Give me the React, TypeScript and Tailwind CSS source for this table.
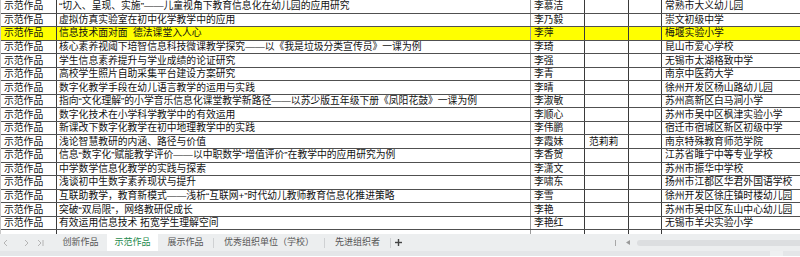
import React from 'react';

type Row = { title: string; name: string; helper?: string; school: string; hl?: boolean };

const rows: Row[] = [
  { title: '“切入、呈现、实施”——儿童视角下教育信息化在幼儿园的应用研究', name: '李慕洁', school: '常熟市大义幼儿园' },
  { title: '虚拟仿真实验室在初中化学教学中的应用', name: '李乃毅', school: '崇文初级中学' },
  { title: '信息技术面对面  德法课堂入人心', name: '李萍', school: '梅堰实验小学', hl: true },
  { title: '核心素养视阈下培智信息科技微课教学探究——以《我是垃圾分类宣传员》一课为例', name: '李琦', school: '昆山市爱心学校' },
  { title: '学生信息素养提升与学业成绩的论证研究', name: '李强', school: '无锡市太湖格致中学' },
  { title: '高校学生照片自助采集平台建设方案研究', name: '李青', school: '南京中医药大学' },
  { title: '数字化教学手段在幼儿语言教学的运用与实践', name: '李晴', school: '徐州开发区杨山路幼儿园' },
  { title: '指向“文化理解”的小学音乐信息化课堂教学新路径——以苏少版五年级下册《凤阳花鼓》一课为例', name: '李淑敏', school: '苏州高新区白马涧小学' },
  { title: '数字化技术在小学科学教学中的有效运用', name: '李顺心', school: '苏州市吴中区枫津实验小学' },
  { title: '新课改下数字化教学在初中地理教学中的实践', name: '李伟鹏', school: '宿迁市宿城区新区初级中学' },
  { title: '浅论智慧教研的内涵、路径与价值', name: '李霞妹', helper: '范莉莉', school: '南京特殊教育师范学院' },
  { title: '信息“数字化”赋能教学评价——以中职数学“增值评价”在教学中的应用研究为例', name: '李香贺', school: '江苏省睢宁中等专业学校' },
  { title: '中学数学信息化教学的实践与探索', name: '李潇文', school: '苏州市振华中学校' },
  { title: '浅谈初中生数字素养现状与提升', name: '李啸东', school: '扬州市江都区华君外国语学校' },
  { title: '互联助教学，教育新模式——浅析“互联网+”时代幼儿教师教育信息化推进策略', name: '李雪', school: '徐州开发区徐庄镇时楼幼儿园' },
  { title: '突破“双局限”，网络教研促成长', name: '李艳', school: '苏州市吴中区东山中心幼儿园' },
  { title: '有效运用信息技术 拓宽学生理解空间', name: '李艳红', school: '无锡市羊尖实验小学' },
];

const tabs = [
  { label: '创新作品', w: 'w-[53px]' },
  { label: '示范作品', w: 'w-[51px]', active: true },
  { label: '展示作品', w: 'w-[55px]' },
  { label: '优秀组织单位（学校）', w: 'w-[110px]' },
  { label: '先进组织者', w: 'w-[65px]' },
];

function SheetRow({ r }: { r: Row }) {
  return (
    <div className={`flex h-[13.56px] border-b border-[#505050] ${r.hl ? 'bg-[#ffff00]' : 'bg-white'}`}>
      <div className="w-[56px] shrink-0 pl-[3px] flex items-center border-r border-[#3a3a3a]">示范作品</div>
      <div className="w-[474px] shrink-0 pl-[2px] flex items-center border-r border-[#9a9a9a] whitespace-pre overflow-hidden">{r.title}</div>
      <div className="w-[54px] shrink-0 pl-[3px] flex items-center border-r border-[#3a3a3a]">{r.name}</div>
      <div className="w-[44px] shrink-0 pl-[4px] flex items-center border-r border-[#3a3a3a]">{r.helper ?? ''}</div>
      <div className="w-[33px] shrink-0 border-r border-[#3a3a3a]" />
      <div className="flex-1 pl-[3px] flex items-center whitespace-nowrap">{r.school}</div>
    </div>
  );
}

export default function App() {
  return (
    <div className="w-[800px] h-[257px] overflow-hidden bg-white text-[#111] font-['Liberation_Sans','Noto_Sans_CJK_SC',sans-serif] text-[9.8px] leading-none">
      <div className="border-l border-[#c8c8c8]">
        {rows.map((r, i) => (
          <SheetRow key={i} r={r} />
        ))}
        {/* partially visible next row */}
        <div className="flex h-[4px]">
          <div className="w-[56px] shrink-0 border-r border-[#3a3a3a]" />
          <div className="w-[474px] shrink-0 border-r border-[#9a9a9a]" />
          <div className="w-[54px] shrink-0 border-r border-[#3a3a3a]" />
          <div className="w-[44px] shrink-0 border-r border-[#3a3a3a]" />
          <div className="w-[33px] shrink-0 border-r border-[#3a3a3a]" />
        </div>
      </div>

      {/* sheet tabs */}
      <div className="flex h-[17px] items-stretch bg-[#eceeef] text-[9px] text-[#555]">
        <div className="w-[54px] shrink-0 flex items-center gap-[10px] pl-[3px] text-[#b4b4b4]">
          <svg width="5" height="8" viewBox="0 0 5 8" fill="none" stroke="currentColor" strokeWidth="1">
            <polyline points="4,1 1,4 4,7" />
          </svg>
          <svg width="5" height="8" viewBox="0 0 5 8" fill="none" stroke="currentColor" strokeWidth="1" className="ml-[6px]">
            <polyline points="1,1 4,4 1,7" />
          </svg>
          <svg width="7" height="8" viewBox="0 0 7 8" fill="none" stroke="currentColor" strokeWidth="1" className="-ml-[2px]">
            <polyline points="1,1 4,4 1,7" />
            <line x1="6" y1="1" x2="6" y2="7" />
          </svg>
        </div>
        {tabs.map((t, i) => (
          <React.Fragment key={t.label}>
            <div
              className={`${t.w} shrink-0 flex items-center justify-center whitespace-nowrap ${
                t.active ? 'bg-white text-[#1d8a4c]' : ''
              }`}
            >
              {t.label}
            </div>
            {i >= 2 && <div className="w-px h-[10px] self-center bg-[#cfd1d3]" />}
          </React.Fragment>
        ))}
        <div className="w-[14px] flex items-center justify-center text-[#444]">
          <svg width="7" height="7" viewBox="0 0 7 7" stroke="currentColor" strokeWidth="1.4">
            <line x1="3.5" y1="0" x2="3.5" y2="7" />
            <line x1="0" y1="3.5" x2="7" y2="3.5" />
          </svg>
        </div>
        <div className="flex-1" />
        <div className="w-[185px] shrink-0 flex items-center">
          <div className="w-px h-[6px] bg-[#a8a8a8]" />
          <svg width="4" height="5" viewBox="0 0 4 5" className="ml-[10px] text-[#9a9a9a]" fill="currentColor">
            <polygon points="4,0 0,2.5 4,5" />
          </svg>
          <div className="flex-1 h-[6px] ml-[7px] rounded-l-full bg-[#dcdee0]" />
        </div>
      </div>
      <div className="h-[5px] bg-[#e4e6e8] flex justify-end pr-[17px]">
        <div className="w-[13px] h-full bg-[#eef0f1]" />
      </div>
    </div>
  );
}
